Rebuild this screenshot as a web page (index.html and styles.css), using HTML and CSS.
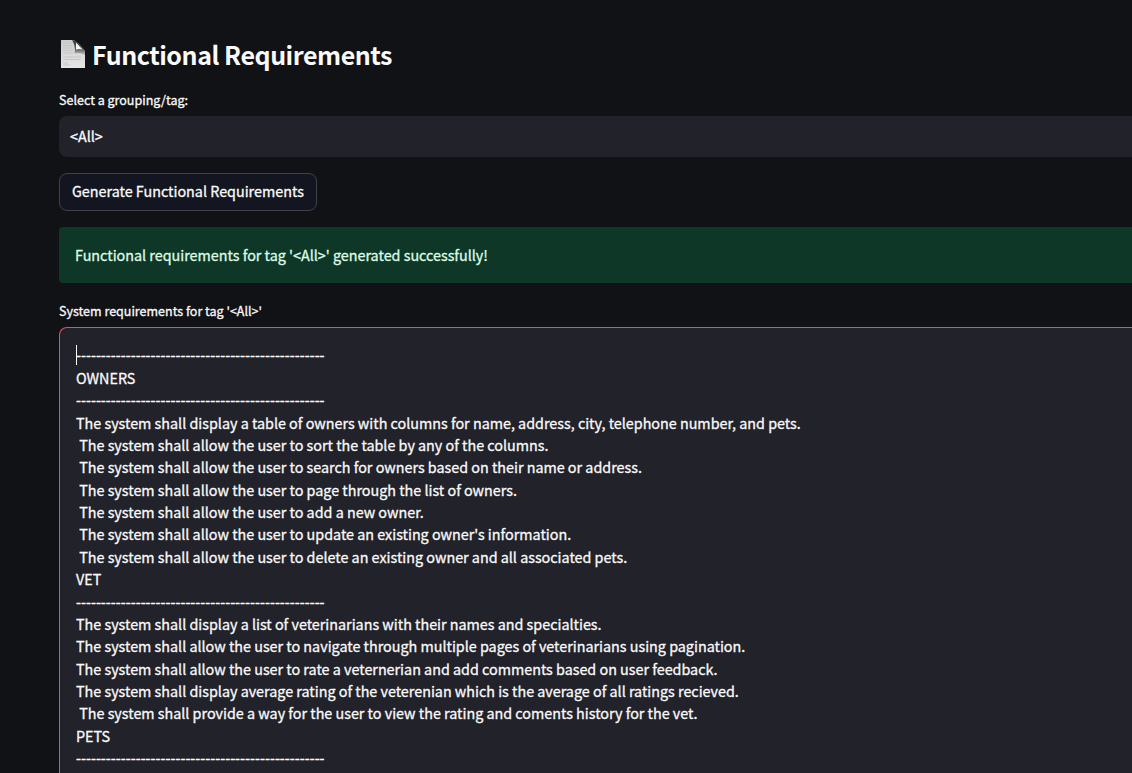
FILE: index.html
```html
<!DOCTYPE html>
<html lang="en">
<head>
<meta charset="utf-8">
<title>Functional Requirements</title>
<link rel="stylesheet" href="styles.css">
</head>
<body>
<main class="page">
<h1 class="title"><svg class="doc" viewBox="0 0 26 30" aria-hidden="true">
<defs><linearGradient id="paper" x1="0" y1="0" x2="0" y2="1"><stop offset="0" stop-color="#cdcdcd"/><stop offset="1" stop-color="#e6e6e6"/></linearGradient>
<linearGradient id="shade" x1="0" y1="0" x2="0" y2="1"><stop offset="0" stop-color="#333"/><stop offset="0.6" stop-color="#5c5c5c"/><stop offset="1" stop-color="#c8c8c8"/></linearGradient></defs>
<path d="M2.500 0H14C18 1 25 9 26 13V28H2.500Q2 28 2 27.500V.5Q2 0 2.500 0Z" fill="url(#paper)"/>
<path d="M4 3h8M4 5.500h9M4 8h9M4 10.500h10M4 13h10M4 17h18M4 19.500h18M4 23h5M4 25h7" stroke="#c2c2c2" stroke-width=".8"/>
<path d="M13 0Q19 1 26 10.500V15Q20 12 15.500 13.500Q17 6 13 0Z" fill="url(#shade)"/>
<path d="M17 2.500V9.500Q20 8.500 23.500 9.500Z" fill="#f4f4f4"/>
</svg><span>Functional Requirements</span></h1>
<div class="label">Select a grouping/tag:</div>
<div class="select">&lt;All&gt;</div>
<button class="generate" type="button">Generate Functional Requirements</button>
<div class="alert" role="status">Functional requirements for tag '&lt;All&gt;' generated successfully!</div>
<div class="label label-area">System requirements for tag '&lt;All&gt;'</div>
<div class="area"><span class="caret"></span><pre class="text"><span class="rule">--------------------------------------------------</span>
OWNERS
<span class="rule">--------------------------------------------------</span>
The system shall display a table of owners with columns for name, address, city, telephone number, and pets.
 The system shall allow the user to sort the table by any of the columns.
 The system shall allow the user to search for owners based on their name or address.
 The system shall allow the user to page through the list of owners.
 The system shall allow the user to add a new owner.
 The system shall allow the user to update an existing owner's information.
 The system shall allow the user to delete an existing owner and all associated pets.
VET
<span class="rule">--------------------------------------------------</span>
The system shall display a list of veterinarians with their names and specialties.
The system shall allow the user to navigate through multiple pages of veterinarians using pagination.
The system shall allow the user to rate a veternerian and add comments based on user feedback.
The system shall display average rating of the veterenian which is the average of all ratings recieved.
 The system shall provide a way for the user to view the rating and coments history for the vet.
PETS
<span class="rule">--------------------------------------------------</span></pre></div>
</main>
</body>
</html>
```
FILE: styles.css
```css
* { box-sizing: border-box; }

body {
  margin: 0;
  height: 773px;
  overflow: hidden;
  background: #111216;
  color: #fafafa;
  font-family: "Noto Sans CJK SC", "Noto Sans", sans-serif;
  font-size: 14.33px;
  -webkit-text-stroke: 0.3px currentColor;
}

.page {
  margin-left: 59px;
  padding-top: 38px;
}

.title {
  display: flex;
  align-items: center;
  gap: 7px;
  height: 34px;
  margin: 0 0 18px;
  font-size: 25px;
  font-weight: 700;
  line-height: 34px;
  letter-spacing: -0.45px;
  white-space: nowrap;
  -webkit-text-stroke: 0;
}

.title span { margin-top: -2px; }

.doc { width: 26px; height: 30px; }

.label {
  height: 20px;
  margin-bottom: 6px;
  font-size: 12.53px;
  line-height: 20px;
}

.select {
  height: 41px;
  padding-left: 11px;
  border-radius: 8px 0 0 8px;
  background: #22222a;
  line-height: 39px;
}

.generate {
  display: block;
  width: 258px;
  height: 38px;
  margin: 16px 0;
  padding: 0 12px 2px;
  border: 1px solid #414249;
  border-radius: 8px;
  background: #131620;
  color: inherit;
  font: inherit;
  line-height: 34px;
  text-align: left;
  white-space: nowrap;
}

.alert {
  height: 56px;
  padding-left: 16px;
  border-radius: 4px 0 0 4px;
  background: #0f3728;
  color: #ddfce5;
  line-height: 55px;
}

.label-area { margin: 18px 0 6px; }

.area {
  position: relative;
  height: 446px;
  padding: 16.4px 0 0 16px;
  border: 1px solid #f24b4e;
  border-width: 1px 0 0 1px;
  border-radius: 8px 0 0 0;
  background: #22222a;
}

.text {
  margin: 0;
  font: inherit;
  line-height: 22.38px;
}

.caret {
  position: absolute;
  left: 16px;
  top: 17px;
  width: 1px;
  height: 20px;
  background: #fff;
}
```
